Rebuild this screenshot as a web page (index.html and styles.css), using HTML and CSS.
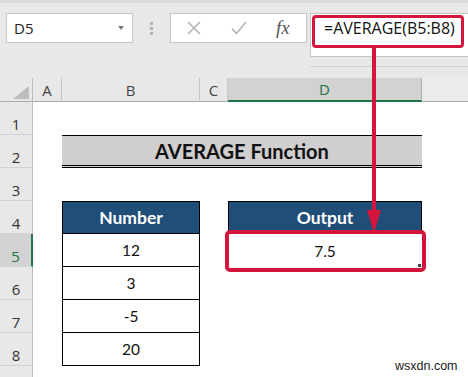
FILE: index.html
```html
<!DOCTYPE html>
<html lang="en">
<head>
    <meta charset="UTF-8">
    <meta name="viewport" content="width=device-width, initial-scale=1.0">
    <title>AVERAGE Function</title>
    <link rel="stylesheet" href="styles.css">
</head>
<body>
    <div class="toolbar">
        <div class="namebox">
            <span>D5</span>
            <span class="caret"></span>
        </div>
        <div class="grip"><i></i><i></i><i></i></div>
        <div class="buttons">
            <svg class="icon" width="14" height="14" viewBox="0 0 14 14">
                <path d="M1 1 L13 13 M13 1 L1 13" stroke="#b4b4b4" stroke-width="1.6" fill="none"/>
            </svg>
            <svg class="icon" width="16" height="14" viewBox="0 0 16 14">
                <path d="M1 7.5 L5.5 12.5 L15 1" stroke="#b4b4b4" stroke-width="1.6" fill="none"/>
            </svg>
            <span class="fx">fx</span>
        </div>
        <div class="formula">
            <span>=AVERAGE(B5:B8)</span>
        </div>
    </div>
    <div class="bar-line"></div>

    <div class="sheet">
        <div class="row head">
            <div class="rh corner">
                <svg width="16" height="13" viewBox="0 0 16 13"><polygon points="16,0 16,13 0,13" fill="#bdbdbd"/></svg>
            </div>
            <div class="ca hc">A</div>
            <div class="cb hc">B</div>
            <div class="cc hc">C</div>
            <div class="cd hc selected">D</div>
            <div class="cr hc rest"></div>
        </div>

        <div class="row">
            <div class="rh">1</div>
            <div class="ca"></div><div class="cb"></div><div class="cc"></div><div class="cd"></div><div class="cr"></div>
        </div>
        <div class="row">
            <div class="rh">2</div>
            <div class="ca"></div>
            <div class="title">AVERAGE Function</div>
            <div class="cr"></div>
        </div>
        <div class="row">
            <div class="rh">3</div>
            <div class="ca"></div><div class="cb"></div><div class="cc"></div><div class="cd"></div><div class="cr"></div>
        </div>
        <div class="row">
            <div class="rh">4</div>
            <div class="ca"></div>
            <div class="cb th">Number</div>
            <div class="cc"></div>
            <div class="cd th">Output</div>
            <div class="cr"></div>
        </div>
        <div class="row">
            <div class="rh active">5</div>
            <div class="ca"></div>
            <div class="cb td">12</div>
            <div class="cc"></div>
            <div class="cd val">7.5</div>
            <div class="cr"></div>
        </div>
        <div class="row">
            <div class="rh">6</div>
            <div class="ca"></div>
            <div class="cb td">3</div>
            <div class="cc"></div><div class="cd"></div><div class="cr"></div>
        </div>
        <div class="row">
            <div class="rh">7</div>
            <div class="ca"></div>
            <div class="cb td">-5</div>
            <div class="cc"></div><div class="cd"></div><div class="cr"></div>
        </div>
        <div class="row">
            <div class="rh">8</div>
            <div class="ca"></div>
            <div class="cb td">20</div>
            <div class="cc"></div><div class="cd"></div><div class="cr"></div>
        </div>
        <div class="row last">
            <div class="rh"></div>
            <div class="ca"></div><div class="cb"></div><div class="cc"></div><div class="cd"></div><div class="cr"></div>
        </div>
    </div>

    <!-- annotations drawn over the sheet -->
    <div class="hl-formula"></div>
    <div class="hl-output"><span class="handle"></span></div>
    <svg class="arrow" width="17" height="186" viewBox="0 0 17 186">
        <line x1="8" y1="0" x2="8" y2="168" stroke="#d4163c" stroke-width="4"/>
        <polygon points="1,162 15,162 8,185" fill="#d4163c"/>
    </svg>
    <div class="watermark">wsxdn.com</div>
</body>
</html>
```

FILE: styles.css
```css
body {
    margin: 0;
    padding: 0;
    width: 468px;
    height: 377px;
    overflow: hidden;
    position: relative;
    background-color: #e8e8e8;
    font-family: "Open Sans", "Liberation Sans", sans-serif;
    color: #222;
}

/* formula bar */
.toolbar {
    display: flex;
    align-items: flex-start;
    height: 78px;
    padding: 13px 0 0 6px;
    box-sizing: border-box;
    border-top: 3px solid #dcdcdc;
}

.toolbar > div {
    flex-shrink: 0;
}

.namebox {
    width: 127px;
    height: 30px;
    margin-top: -3px;
    box-sizing: border-box;
    background: #fff;
    border: 1px solid #c6c6c6;
    display: flex;
    align-items: center;
    justify-content: space-between;
    padding: 0 8px 0 7px;
    font-size: 15px;
}

.caret {
    width: 0;
    height: 0;
    border-left: 3.5px solid transparent;
    border-right: 3.5px solid transparent;
    border-top: 4px solid #777;
}

.grip {
    width: 37px;
    height: 30px;
    margin-top: -3px;
    display: flex;
    flex-direction: column;
    align-items: center;
    justify-content: center;
    gap: 2px;
}

.grip i {
    width: 3px;
    height: 3px;
    background: #b4b4b4;
}

.buttons {
    width: 137px;
    height: 30px;
    margin-top: -3px;
    box-sizing: border-box;
    background: #fff;
    border: 1px solid #c6c6c6;
    display: flex;
    align-items: center;
    padding-left: 16px;
    gap: 30px;
}

.fx {
    font-family: "Liberation Serif", serif;
    font-style: italic;
    font-size: 19px;
    color: #555;
    margin-left: -1px;
}

.formula {
    width: 170px;
    height: 44px;
    margin: -3px 0 0 3px;
    box-sizing: border-box;
    background: #fff;
    border: 1px solid #c6c6c6;
    padding: 3px 0 0 13px;
    font-size: 16px;
    color: #111;
}

.bar-line {
    position: absolute;
    left: 310px;
    top: 66px;
    right: 0;
    height: 1px;
    background: #d2d2d2;
}

/* sheet */
.sheet {
    background: #fff;
}

.row {
    display: flex;
    height: 33px;
}

.row.last {
    height: 11px;
}

.row > div {
    box-sizing: border-box;
    flex-shrink: 0;
}

.rh {
    width: 33px;
    background: #e8e8e8;
    border-right: 1px solid #bdbdbd;
    border-bottom: 1px solid #d2d2d2;
    display: flex;
    align-items: center;
    justify-content: center;
    padding-top: 11px;
    font-size: 15px;
    color: #333;
}

.rh.active {
    background: #d2d2d2;
    color: #217346;
    border-right: 2px solid #217346;
}

.ca { width: 29px; }
.cb { width: 138px; }
.cc { width: 28px; }
.cd { width: 194px; }
.row > .cr { flex: 1; }

.row.head {
    height: 24px;
    background: #e8e8e8;
}

.row.head .rh {
    padding: 0;
    align-items: flex-end;
    justify-content: flex-end;
    border-bottom: 1px solid #ababab;
}

.row.head .corner svg {
    margin: 0 3px 2px 0;
}

.hc {
    display: flex;
    align-items: center;
    justify-content: center;
    font-size: 15px;
    color: #444;
    border-right: 1px solid #c6c6c6;
    border-bottom: 1px solid #ababab;
}

.hc.selected {
    background: #d2d2d2;
    color: #217346;
    border-bottom: 2px solid #217346;
    border-right: 1px solid #ababab;
}

.hc.rest {
    background: #ebebeb;
    border-right: none;
}

.title {
    width: 360px;
    background: #d0cece;
    border-top: 1px solid #000;
    border-bottom: 3px double #000;
    display: flex;
    align-items: center;
    justify-content: center;
    font-family: Lato, "Liberation Sans", sans-serif;
    font-weight: bold;
    font-size: 20px;
    color: #111;
}

.th {
    background: #1f4e78;
    border: 1px solid #000;
    display: flex;
    align-items: center;
    justify-content: center;
    font-family: Lato, "Liberation Sans", sans-serif;
    font-weight: bold;
    font-size: 17.5px;
    color: #fff;
}

.td, .val {
    display: flex;
    align-items: center;
    justify-content: center;
    font-family: Lato, "Liberation Sans", sans-serif;
    font-size: 15.5px;
    color: #111;
}

.td {
    border: 1px solid #000;
    border-top: none;
}

/* overlays */
.hl-formula {
    position: absolute;
    left: 312px;
    top: 15px;
    width: 152px;
    height: 33px;
    box-sizing: border-box;
    border: 3px solid #d4163c;
    border-radius: 4px;
}

.hl-output {
    position: absolute;
    left: 225px;
    top: 230px;
    width: 201px;
    height: 42px;
    box-sizing: border-box;
    border: 4px solid #d4163c;
    border-radius: 5px;
}

.handle {
    position: absolute;
    right: 1px;
    bottom: 1px;
    width: 3px;
    height: 3px;
    background: #444;
}

.arrow {
    position: absolute;
    left: 366px;
    top: 48px;
}

.watermark {
    position: absolute;
    left: 395px;
    top: 359px;
    font-family: "Liberation Sans", Arial, sans-serif;
    font-size: 12.5px;
    color: #1a1a1a;
}
```
